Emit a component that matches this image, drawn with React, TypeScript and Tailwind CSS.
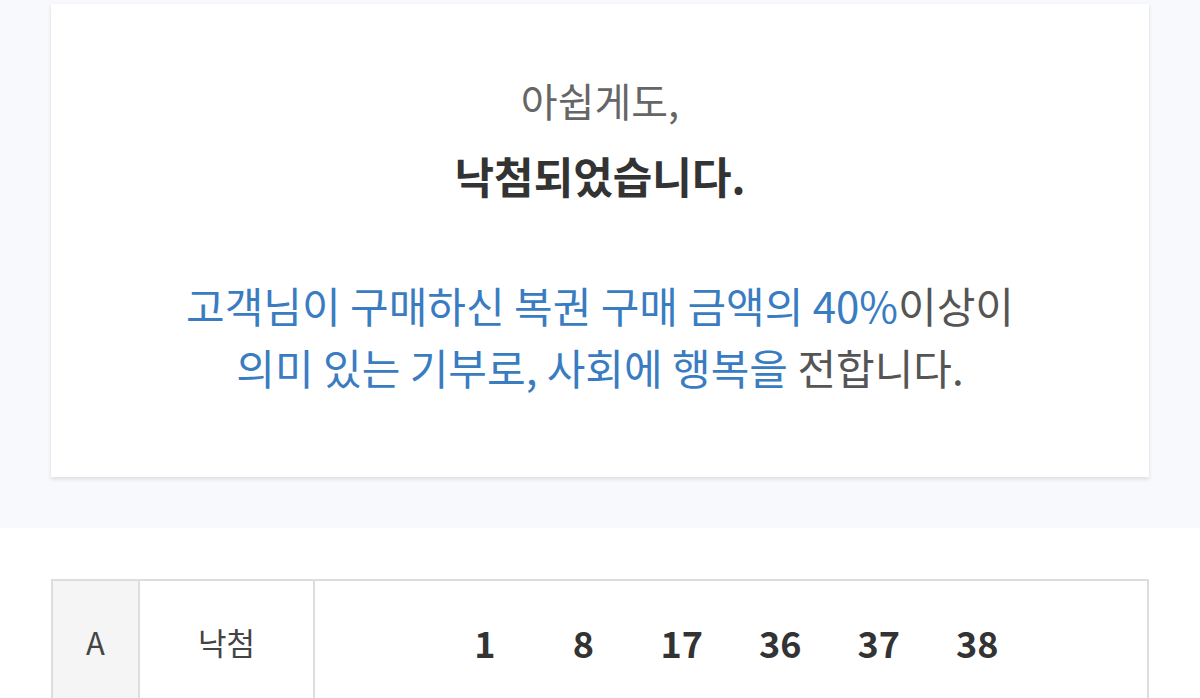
const NUMBERS = [1, 8, 17, 36, 37, 38]

const KR = "font-['Noto_Sans_CJK_KR','Noto_Sans',sans-serif]"

function ResultCard() {
  return (
    <div className="bg-white shadow-[0_2px_4px_rgba(0,0,0,0.12)] pt-[68px] pb-[79px] text-center">
      <p className="text-[40px] leading-[56px] text-[#666]">아쉽게도,</p>
      <p className="mt-[19px] text-[43px] leading-[56px] font-bold text-[#333]">낙첨되었습니다.</p>
      <p className="mt-[71px] text-[42px] leading-[62px] text-[#3a7cc1]">
        고객님이 구매하신 복권 구매 금액의 40%<span className="text-[#555]">이상이</span>
        <br />
        의미 있는 기부로, 사회에 행복을 <span className="text-[#555]">전합니다.</span>
      </p>
    </div>
  )
}

function DrawRow() {
  return (
    <div className="flex border-2 border-[#ddd] h-[126px]">
      <div className="w-[87px] flex items-center justify-center bg-[#f5f5f5] border-r-2 border-[#ddd] text-[31px] text-[#444]">
        A
      </div>
      <div className="w-[175px] flex items-center justify-center border-r-2 border-[#ddd] text-[31px] text-[#444]">
        낙첨
      </div>
      <div className="flex-1 flex items-center justify-center">
        {NUMBERS.map((n) => (
          <span key={n} className="w-[98.5px] text-center text-[36px] font-bold text-[#333]">
            {n}
          </span>
        ))}
      </div>
    </div>
  )
}

export default function App() {
  return (
    <div className={`${KR} bg-white min-h-[698px]`}>
      <section className="bg-[#f7f9fc] px-[51px] pt-[4px] pb-[51px]">
        <ResultCard />
      </section>
      <section className="px-[51px] pt-[51px]">
        <DrawRow />
      </section>
    </div>
  )
}
